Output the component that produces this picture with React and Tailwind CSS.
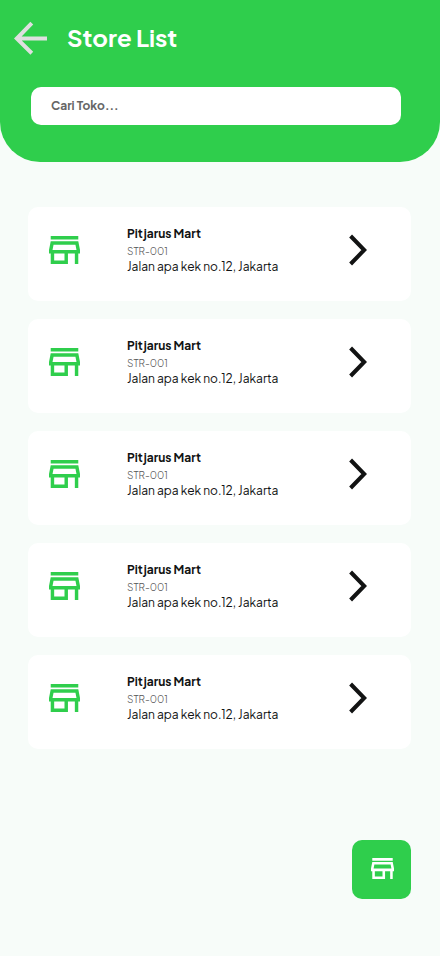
const stores = [1, 2, 3, 4, 5].map((id) => ({
  id,
  name: "Pitjarus Mart",
  code: "STR-001",
  address: "Jalan apa kek no.12, Jakarta",
}));

function StoreIcon({ className }) {
  return (
    <svg viewBox="3 4 18 16" preserveAspectRatio="none" fill="currentColor" className={className}>
      <path d="M18.36 9l.6 3H5.04l.6-3h12.72M20 4H4v2h16V4zm0 3H4l-1 5v2h1v6h10v-6h4v6h2v-6h1v-2l-1-5zM6 18v-4h6v4H6z" />
    </svg>
  );
}

function StoreCard({ store }) {
  return (
    <li className="flex h-[94px] rounded-[10px] bg-white">
      <StoreIcon className="mt-[29px] ml-[21px] h-7 w-[31px] shrink-0 text-[#2fce4c]" />
      <div className="mt-[18px] ml-[47px] w-[222px] shrink-0 whitespace-nowrap text-[#111313]">
        <p className="text-[12px] leading-[18px] font-bold">{store.name}</p>
        <p className="text-[10px] leading-[17px] font-light text-[#555]">{store.code}</p>
        <p className="text-[12px] leading-[14px]">{store.address}</p>
      </div>
      <svg viewBox="0 0 18 32" fill="none" stroke="#121313" strokeWidth="4" className="mt-[27px] h-8 w-[18px] shrink-0">
        <path d="M1.6 2L15.2 16L1.6 30" />
      </svg>
    </li>
  );
}

export default function App() {
  return (
    <div className="flex h-[956px] w-[440px] flex-col bg-[#f7fcf9] font-['Plus_Jakarta_Sans','Inter',sans-serif]">
      <header className="h-[162px] rounded-b-[40px] bg-[#2fce4c]">
        <div className="flex h-[87px] pl-[14px]">
          <svg viewBox="0 0 33 34" fill="none" stroke="#dfdfdf" strokeWidth="4" className="mt-[21px] h-[34px] w-[33px]">
            <path d="M33 17.5H4M17.8 2.2L2.8 17.5L17.8 32.2" />
          </svg>
          <h1 className="mt-[21px] ml-5 text-[24px] leading-8 font-bold text-white">Store List</h1>
        </div>
        <input
          type="text"
          placeholder="Cari Toko..."
          className="ml-[31px] block h-[38px] w-[370px] rounded-[10px] bg-white px-5 pb-[2px] text-[12px] font-bold text-[#666] placeholder:text-[#666] placeholder:opacity-100"
        />
      </header>
      <ul className="mt-[45px] mr-[29px] ml-7 flex flex-col gap-[18px]">
        {stores.map((store) => (
          <StoreCard key={store.id} store={store} />
        ))}
      </ul>
      <button className="mt-[91px] mr-[29px] flex h-[59px] w-[59px] self-end rounded-[10px] bg-[#2fce4c] pt-[18px] pl-[19px] text-white">
        <StoreIcon className="h-[21px] w-[23px]" />
      </button>
    </div>
  );
}
